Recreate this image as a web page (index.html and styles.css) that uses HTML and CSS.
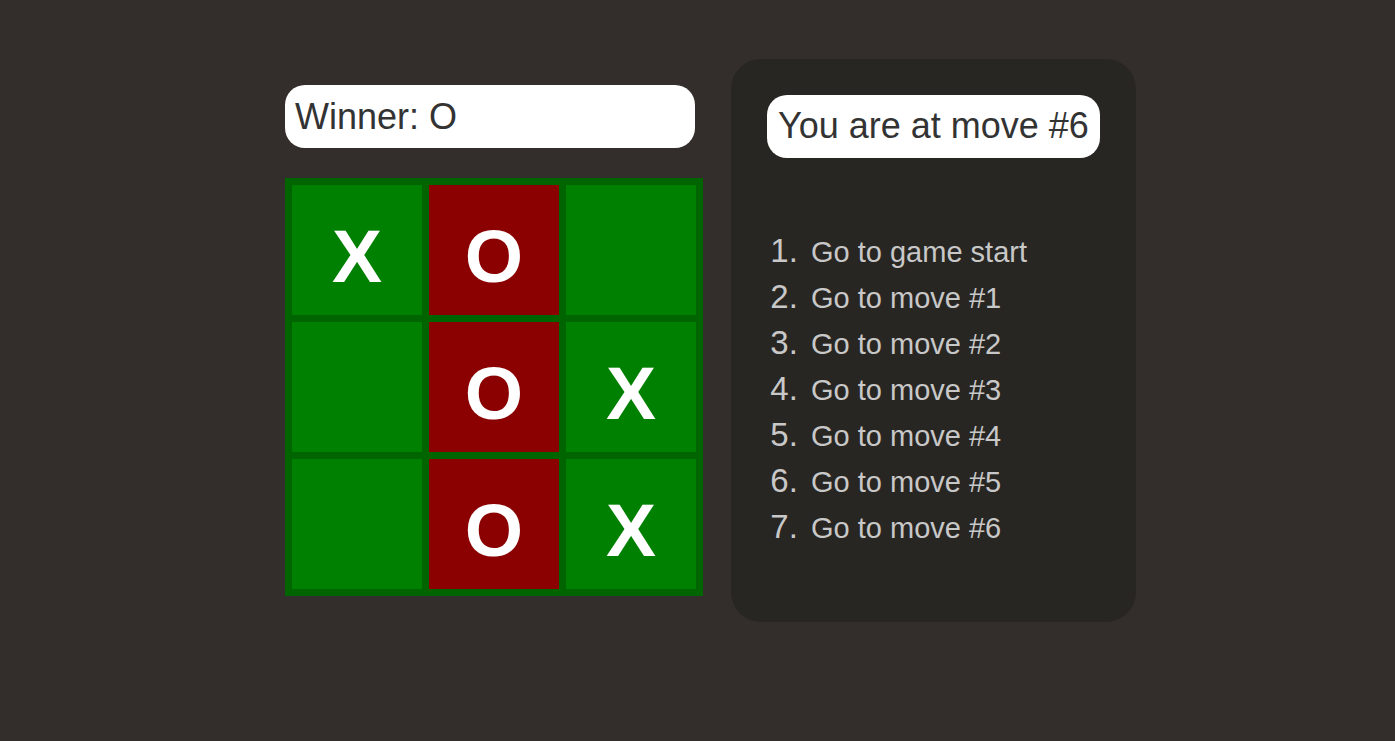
FILE: index.html
```html
<!DOCTYPE html>
<html lang="en">
<head>
<meta charset="utf-8">
<title>Tic-Tac-Toe</title>
<link rel="stylesheet" href="styles.css">
</head>
<body>
<div class="app">
  <div class="game">
    <div class="status">Winner: O</div>
    <div class="board">
      <button class="cell">X</button>
      <button class="cell win">O</button>
      <button class="cell"></button>
      <button class="cell"></button>
      <button class="cell win">O</button>
      <button class="cell">X</button>
      <button class="cell"></button>
      <button class="cell win">O</button>
      <button class="cell">X</button>
    </div>
  </div>
  <div class="info">
    <div class="current">You are at move #6</div>
    <ol class="moves">
      <li><button class="jump">Go to game start</button></li>
      <li><button class="jump">Go to move #1</button></li>
      <li><button class="jump">Go to move #2</button></li>
      <li><button class="jump">Go to move #3</button></li>
      <li><button class="jump">Go to move #4</button></li>
      <li><button class="jump">Go to move #5</button></li>
      <li><button class="jump">Go to move #6</button></li>
    </ol>
  </div>
</div>
</body>
</html>
```

FILE: styles.css
```css
html, body {
  margin: 0;
  padding: 0;
  background: #332e2b;
  font-family: "Liberation Sans", Arial, sans-serif;
}

.app {
  display: flex;
  align-items: center;
  gap: 28px;
  padding: 59px 0 0 285px;
}

.game {
  display: flex;
  flex-direction: column;
  gap: 30px;
  width: 418px;
}

.status {
  width: 410px;
  box-sizing: border-box;
  background: #ffffff;
  color: #333333;
  border-radius: 20px;
  font-size: 36px;
  line-height: 41px;
  padding: 11px 10px;
}

.board {
  display: grid;
  grid-template-columns: repeat(3, 130px);
  grid-template-rows: repeat(3, 130px);
  gap: 7px;
  padding: 7px;
  background: #006400;
  width: max-content;
}

.cell {
  border: 0;
  margin: 0;
  padding: 12px 0 0;
  background: #008000;
  color: #ffffff;
  font-family: "Liberation Sans", Arial, sans-serif;
  font-weight: bold;
  font-size: 75px;
  line-height: 1;
  display: flex;
  align-items: center;
  justify-content: center;
}

.cell.win {
  background: #8b0000;
}

.info {
  width: 405px;
  box-sizing: border-box;
  background: #282623;
  border-radius: 30px;
  padding: 36px;
}

.current {
  display: inline-block;
  background: #ffffff;
  color: #333333;
  border-radius: 20px;
  font-size: 36px;
  line-height: 41px;
  padding: 10px 11px 12px;
}

.moves {
  margin: 70px 0 36px;
  padding-left: 40px;
  color: #c8c8c8;
  font-size: 33px;
  line-height: 46px;
}

.moves li {
  height: 46px;
}

.jump {
  border: 0;
  margin: 0;
  background: none;
  color: #c8c8c8;
  font-family: "Liberation Sans", Arial, sans-serif;
  font-size: 29px;
  line-height: normal;
  padding: 0 4px;
}
```
